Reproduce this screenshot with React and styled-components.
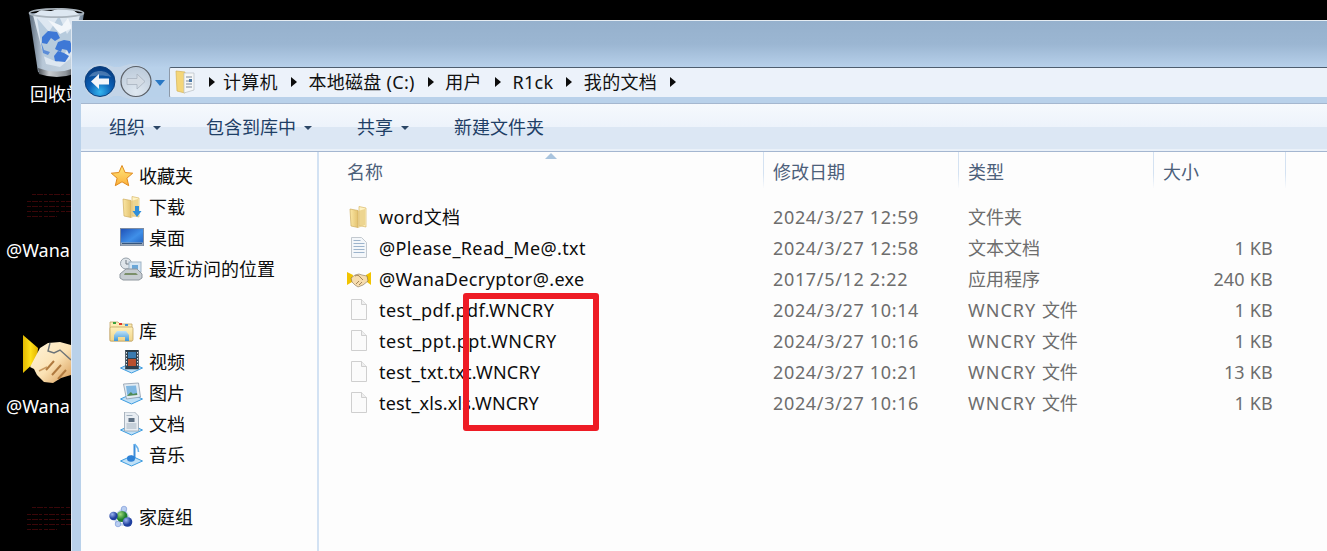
import React from "react";
import styled, { createGlobalStyle } from "styled-components";

const Global = createGlobalStyle`
  html, body { margin: 0; padding: 0; background: #000; overflow: hidden; }
  * { box-sizing: border-box; }
  body { font-family: "Noto Sans", "Noto Sans CJK SC", sans-serif; font-size: 18px; }
`;

const Desktop = styled.div`
  position: relative; width: 1327px; height: 551px; background: #000; overflow: hidden;
`;
const DesktopItem = styled.div`
  position: absolute; left: ${p => p.$x}px; top: ${p => p.$y}px; line-height: 0;
`;
const DesktopLabel = styled.div`
  position: absolute; left: ${p => p.$x}px; top: ${p => p.$y}px;
  color: #fff; font-size: 18px; line-height: 24px; white-space: nowrap;
`;
const Win = styled.div`
  position: absolute; left: 71px; top: 20px; width: 1256px; height: 531px;
  display: flex; flex-direction: column; border-top: 1px solid #e6edf3; border-left: 1px solid #dfe8f2;
  background: #b9d1ea;
`;
const TitleBar = styled.div`
  height: 46px; flex: none;
  background: linear-gradient(#96b1cd 0, #9bb6d2 50%, #b7d0ea 100%);
`;
const NavRow = styled.div`
  height: 30px; flex: none; display: flex; align-items: center; background: #b8d1ea;
`;
const NavArea = styled.div`
  width: 97px; flex: none; height: 30px; position: relative;
`;
const NavSlot = styled.div`
  position: absolute; left: 12px; top: -4px; line-height: 0;
`;
const AddressBar = styled.div`
  flex: 1; height: 31px; display: flex; align-items: center;
  background: #ecf2fa; border-top: 1px solid #4e5d6e; border-left: 1px solid #8d99a8; border-bottom: 1px solid #a3adb9;
  border-top-left-radius: 2px; border-bottom-left-radius: 2px; padding-left: 5px;
`;
const Crumb = styled.span`
  color: #111; font-size: 18px; line-height: 24px; white-space: nowrap; letter-spacing: .3px;
`;
const CrumbArrow = styled.i`
  flex: none; width: 0; height: 0; margin: 0 ${p => p.$right ?? 11.5}px 0 ${p => p.$left ?? 13}px;
  border-left: 6px solid #0c0c0c; border-top: 5.5px solid transparent; border-bottom: 5.5px solid transparent;
`;
const Strip = styled.div`
  height: 6px; flex: none; background: #b9d1ea;
`;
const Main = styled.div`
  flex: 1; min-height: 0; display: flex; flex-direction: column; margin-left: 9px;
`;
const Toolbar = styled.div`
  height: 49px; flex: none; display: flex; align-items: center; gap: 45px; padding: 0 0 1px 28px;
  background: linear-gradient(#f6f9fd 0, #edf3fb 48%, #dce7f4 48%, #dce7f4 96%, #eaf1f9 96%);
  border-top: 1px solid #a5b7cf; border-bottom: 1px solid #a4b6d0;
`;
const ToolButton = styled.div`
  display: flex; align-items: center; gap: 8px; color: #1f3f66; font-size: 18px; line-height: 24px; white-space: nowrap;
`;
const Caret = styled.i`
  width: 0; height: 0; margin-top: 2px;
  border-top: 4px solid #2c4766; border-left: 4px solid transparent; border-right: 4px solid transparent;
`;
const Body = styled.div`
  flex: 1; min-height: 0; display: flex; background: #fdfdfd;
`;
const Sidebar = styled.nav`
  width: 236px; flex: none; padding: 8px 0 0 28px; display: flex; flex-direction: column;
`;
const Divider = styled.div`
  width: 2px; flex: none; background: #d3e2f3;
`;
const NavGroup = styled.div`
  display: flex; flex-direction: column; margin-bottom: 31px;
`;
const NavItem = styled.div`
  height: 31px; display: flex; align-items: center; gap: 5px;
  padding-left: ${p => (p.$child ? 10 : 0)}px;
  color: #0d0d0d; font-size: 18px; line-height: 24px; white-space: nowrap;
`;
const IconBox = styled.span`
  width: 25px; height: 25px; flex: none; display: flex; align-items: center; justify-content: center;
`;
const Content = styled.section`
  flex: 1; position: relative; min-width: 0; background: #fdfdfd;
`;
const SortArrow = styled.svg`
  position: absolute; left: 226px; top: 1px;
`;
const Header = styled.div`
  height: 41px; display: grid; grid-template-columns: 445px 195px 195px 132px 1fr;
`;
const HeaderCell = styled.div`
  height: 36px; padding: 4px 0 0 ${p => p.$pad}px; color: #4c607a; font-size: 18px; line-height: 32px;
  border-right: 1px solid; border-image: linear-gradient(#d4e2f2 60%, transparent) 1;
`;
const Rows = styled.div`
  display: flex; flex-direction: column; margin-top: 8px;
`;
const Row = styled.div`
  height: 31px; display: grid; grid-template-columns: 444px 195px 185px 130px; align-items: center;
  white-space: nowrap; font-size: 18px; line-height: 24px;
`;
const NameCell = styled.div`
  display: flex; align-items: center; gap: 8px; padding-left: 28px; color: #0d0d0d;
  letter-spacing: ${p => p.$track}px;
`;
const DateCell = styled.div`
  padding-left: 10px; color: #6d6d6d; letter-spacing: .66px;
`;
const TypeCell = styled.div`
  padding-left: 10px; color: #6d6d6d;
`;
const LatinRun = styled.span`
  letter-spacing: 1px;
`;
const SizeCell = styled.div`
  text-align: right; color: #6d6d6d; letter-spacing: .2px;
`;
const FileIconBox = styled.span`
  width: 24px; height: 24px; flex: none; display: flex; align-items: center; justify-content: center;
`;
const Highlight = styled.div`
  position: absolute; left: 144px; top: 141px; width: 136px; height: 138px;
  border: 6px solid #ee1c25; border-radius: 3px;
`;

const StarIcon = () => (
  <svg width="24" height="24" viewBox="0 0 24 24">
    <defs><linearGradient id="st" x1="0" y1="0" x2="0" y2="1"><stop offset="0" stopColor="#ffe77a"/><stop offset="1" stopColor="#fbb03b"/></linearGradient></defs>
    <path d="M12 1.500l3.100 7 7.600.7-5.800 5 1.800 7.500L12 17.800l-6.700 3.900 1.800-7.500-5.800-5 7.600-.7z" fill="url(#st)" stroke="#e08a1e" strokeWidth="1"/>
  </svg>
);
const FolderIcon = ({ arrow }) => (
  <svg width="22" height="24" viewBox="0 0 22 24">
    <defs><linearGradient id="fd" x1="0" y1="0" x2="1" y2="0"><stop offset="0" stopColor="#fbe7a5"/><stop offset="1" stopColor="#e3c26f"/></linearGradient></defs>
    <path d="M6 1.500l7 1.500v19l-7 -1.500z" fill="#fff3c4" stroke="#d9b767" strokeWidth=".7" transform="translate(5 0)"/>
    <path d="M2 4l8 1.500v17l-7-1.500z" fill="url(#fd)" stroke="#cfae5f" strokeWidth=".7"/>
    <path d="M10 6l7-2v16l-7 3z" fill="#e6c77a" opacity=".7"/>
    {arrow && <path d="M16 11h4v5h2.500l-4.500 6-4.500-6h2.500z" fill="#2f8ed9" transform="translate(-2 0)"/>}
  </svg>
);
const DesktopPcIcon = () => (
  <svg width="24" height="20" viewBox="0 0 24 20">
    <defs><linearGradient id="dk" x1="0" y1="0" x2="1" y2="1"><stop offset="0" stopColor="#1f4fb5"/><stop offset=".55" stopColor="#3f8fe8"/><stop offset="1" stopColor="#1c5dbf"/></linearGradient></defs>
    <rect x=".5" y=".5" width="23" height="17" fill="url(#dk)" stroke="#7d8ca3"/>
    <rect x="1" y="14.500" width="22" height="3" fill="#9aa7b7"/>
    <path d="M2 15.500h20" stroke="#34557d"/>
  </svg>
);
const RecentIcon = () => (
  <svg width="25" height="24" viewBox="0 0 25 24">
    <circle cx="7" cy="6.500" r="5.500" fill="#dfe5ea" stroke="#97a1aa"/>
    <path d="M7 3v4h3" stroke="#6f7982" fill="none"/>
    <rect x="10" y="5" width="12" height="10" fill="#d6e6f3" stroke="#9fb3c4"/>
    <rect x="13" y="8" width="6" height="5" fill="#6aa7d8"/>
    <path d="M1 17l6-5h11l5 5v4l-3 2H4l-3-2z" fill="#c6ccd1" stroke="#8f979e"/>
    <path d="M6 16h11l2 2H5z" fill="#7b8f6a"/>
  </svg>
);
const LibraryIcon = () => (
  <svg width="25" height="24" viewBox="0 0 25 24">
    <defs><linearGradient id="lb" x1="0" y1="0" x2="0" y2="1"><stop offset="0" stopColor="#fff1bb"/><stop offset="1" stopColor="#f0d489"/></linearGradient>
    <linearGradient id="lc" x1="0" y1="0" x2="0" y2="1"><stop offset="0" stopColor="#bfe2f7"/><stop offset="1" stopColor="#3c97d8"/></linearGradient></defs>
    <path d="M1 3h8l2 2h12v17H1z" fill="url(#lb)" stroke="#c2a565" strokeWidth=".8"/>
    <rect x="1" y="8" width="23" height="14" rx="1.500" fill="url(#lb)" stroke="#c2a565" strokeWidth=".8"/>
    <rect x="4" y="3" width="3" height="2" fill="#3aa13f"/><rect x="10" y="4" width="3" height="2" fill="#e1372b"/><rect x="16" y="5" width="3" height="2" fill="#3f8fdc"/>
    <path d="M5 22v-6l3-4h9l3 4v6h-4v-4H9v4z" fill="url(#lc)"/>
  </svg>
);
const Pedestal = () => (<path d="M1 18l11-5 11 5-11 5z" fill="#bfe0f7" stroke="#3d9ce0" strokeWidth="1"/>);
const VideoIcon = () => (
  <svg width="25" height="24" viewBox="0 0 24 24">
    <Pedestal/>
    <rect x="6" y="0" width="13" height="19" fill="#2d3f4d" stroke="#20303a" strokeWidth=".5"/>
    <rect x="8.500" y="2" width="8" height="6" fill="#3a7bb0"/><rect x="8.500" y="9" width="8" height="7" fill="#b8502f"/>
    <path d="M7 2v15M18 2v15" stroke="#dfe5ea" strokeDasharray="1.500 1.500"/>
  </svg>
);
const PictureIcon = () => (
  <svg width="25" height="24" viewBox="0 0 24 24">
    <Pedestal/>
    <path d="M4 3l15-1 2 14-14 2z" fill="#e3ecf3" stroke="#8d9bab" strokeWidth=".8"/>
    <path d="M6.500 5l10-.5 1.300 9-10 1z" fill="#7fb7e2"/>
    <path d="M7.400 15l4-4 2 2 4-1 .4 2z" fill="#4f8a55"/>
  </svg>
);
const DocIcon = () => (
  <svg width="25" height="24" viewBox="0 0 24 24">
    <Pedestal/>
    <path d="M5 0h10l4 4v15H5z" fill="#e8edf2" stroke="#97a3b0" strokeWidth=".8"/>
    <rect x="9" y="6" width="6" height="4" fill="#5d6f82"/>
    <path d="M7 3.500h6M7 12h10M7 14h10M7 16h10" stroke="#9cabba" strokeWidth=".9"/>
  </svg>
);
const MusicIcon = () => (
  <svg width="25" height="24" viewBox="0 0 24 24">
    <Pedestal/>
    <path d="M15 1v14.500" stroke="#3c8edb" strokeWidth="2" fill="none"/>
    <path d="M15 1c2 3 4.500 3 4 8" stroke="#69b3ec" strokeWidth="1.600" fill="none"/>
    <ellipse cx="11.500" cy="15.500" rx="4" ry="3.200" fill="#2f82d6"/>
  </svg>
);
const HomeGroupIcon = () => (
  <svg width="25" height="24" viewBox="0 0 25 24">
    <defs>
      <radialGradient id="hb" cx=".35" cy=".3"><stop offset="0" stopColor="#9db7f0"/><stop offset="1" stopColor="#20409f"/></radialGradient>
      <radialGradient id="hg" cx=".35" cy=".3"><stop offset="0" stopColor="#9fdc7e"/><stop offset="1" stopColor="#1d7d2c"/></radialGradient>
    </defs>
    <path d="M5 11L15 3.500M5 11l3 8M15 3.500l6 12M8 19l10 1" stroke="#c4d6ee" strokeWidth="2.500" fill="none"/>
    <circle cx="15" cy="4" r="2.800" fill="#b9cdf0" stroke="#5f83cf" strokeWidth=".5"/>
    <circle cx="9" cy="19" r="2.800" fill="#b9cdf0" stroke="#5f83cf" strokeWidth=".5"/>
    <circle cx="13" cy="11.500" r="5.500" fill="url(#hg)"/>
    <circle cx="4.500" cy="11" r="4.200" fill="url(#hb)"/>
    <circle cx="18.500" cy="17" r="4.800" fill="url(#hb)"/>
  </svg>
);
const FileIcon = () => (
  <svg width="18" height="21" viewBox="0 0 18 21">
    <path d="M1.500 .5h10l5 5v15h-15z" fill="#fbfbfb" stroke="#cfcfcf"/>
    <path d="M11.500 .5v5h5" fill="#efefef" stroke="#cfcfcf"/>
  </svg>
);
const TextFileIcon = () => (
  <svg width="18" height="21" viewBox="0 0 18 21">
    <path d="M1.500 .5h10l5 5v15h-15z" fill="#f4f7fa" stroke="#c3c9cf"/>
    <path d="M3.500 3.500h7M3.500 6.500h11M3.500 9.500h11M3.500 12.500h11M3.500 15.500h11" stroke="#9db4cc"/>
  </svg>
);
const HandshakeSmall = () => (
  <svg width="24" height="20" viewBox="0 0 24 20">
    <path d="M0 3l6 3-1 7-5 3z" fill="#f2c400"/>
    <path d="M24 3l-5 3 1 7 4 3z" fill="#f2c400"/>
    <path d="M4 9l4-3 4-1 3 1 5 1 1 5-5 4-5 2-3-2-3-3z" fill="#f6dcae" stroke="#6b5a40" strokeWidth=".5"/>
    <path d="M8 7c2-1 4-1 5 1l3 3M9 15l3-3M12 16l3-3" stroke="#9a7a4e" strokeWidth=".9" fill="none"/>
  </svg>
);
const HandshakeLarge = () => (
  <svg width="48" height="50" viewBox="0 0 48 50">
    <defs>
      <linearGradient id="cf" x1="0" y1="0" x2="1" y2="0"><stop offset="0" stopColor="#e2b900"/><stop offset=".5" stopColor="#ffe01a"/><stop offset="1" stopColor="#e3b400"/></linearGradient>
      <linearGradient id="hn" x1="0" y1="0" x2="1" y2="1"><stop offset="0" stopColor="#fff5dc"/><stop offset=".55" stopColor="#fbe2b4"/><stop offset="1" stopColor="#d69a55"/></linearGradient>
    </defs>
    <path d="M0 2l15 13-1 12L0 40z" fill="url(#cf)"/>
    <path d="M7 34l10-19 8-5 12-1 11 3v30l-10 3-8 5-9-1-7-7-3-6z" fill="url(#hn)"/>
    <path d="M27 10l-2 8 6 2 6-3 11 10" stroke="#6d7478" strokeWidth="1.400" fill="none"/>
    <path d="M23 37l8-9M29 42l9-10M35 46l8-9" stroke="#b07a3f" strokeWidth="2" fill="none"/>
    <path d="M16 38l8-4" stroke="#c99a60" strokeWidth="1.500"/>
  </svg>
);
const RecycleBin = () => (
  <svg width="57" height="72" viewBox="0 0 57 72">
    <defs>
      <linearGradient id="rb" x1="0" y1="0" x2="1" y2="0"><stop offset="0" stopColor="#5d6c7c"/><stop offset=".25" stopColor="#b8c8d8"/><stop offset=".75" stopColor="#c4d3e0"/><stop offset="1" stopColor="#6e8094"/></linearGradient>
      <linearGradient id="rbase" x1="0" y1="0" x2="1" y2="0"><stop offset="0" stopColor="#4a4f55"/><stop offset=".3" stopColor="#c8ccd0"/><stop offset=".75" stopColor="#8f959b"/><stop offset="1" stopColor="#43474c"/></linearGradient>
    </defs>
    <path d="M1 7L10 66q18 7 37 0L56 7z" fill="url(#rb)"/>
    <path d="M5 9l8-5 10 1 10-3 12 2 7 5-6 24-4 20-10 8-14-3-6-22z" fill="#dde7f1"/>
    <path d="M9 12l12 14 10-16 8 18 6-8-2 20-14 16-14-6z" fill="#b7cbdd"/>
    <path d="M20 14l14 6 6-8 4 10-12 6z" fill="#f2f6fa"/>
    <g fill="#3e78d6">
      <path d="M14 31l6-6 9 1 3 6-5 3-4-3-4 6-5-1z"/>
      <path d="M27 43l3-7 6-2 6 1 3 8-4 5-2-4-5-1-1 3z"/>
      <path d="M30 45l6 2 5 3-4 6-10-1-1-5z"/>
      <path d="M13 36l3 8 6 2-2 3-5-2z" opacity=".75"/>
    </g>
    <path d="M10 62q18 7 37 0l-1 6q-17 6-35 0z" fill="url(#rbase)"/>
    <ellipse cx="28.500" cy="7" rx="27" ry="4.200" fill="none" stroke="#a9b3bc" strokeWidth="1.800"/>
  </svg>
);
const NavButtons = () => (
  <svg width="84" height="38" viewBox="0 0 84 38">
    <defs>
      <radialGradient id="bk" cx=".5" cy=".85" r=".8"><stop offset="0" stopColor="#35b6ef"/><stop offset=".5" stopColor="#0a5fb5"/><stop offset="1" stopColor="#063b80"/></radialGradient>
      <radialGradient id="fw" cx=".5" cy=".85" r=".9"><stop offset="0" stopColor="#dfe8f1"/><stop offset="1" stopColor="#b9c8d8"/></radialGradient>
    </defs>
    <path d="M17 1c6 0 9 2 13 3h6c4-1 7-3 13-3 9 0 16 7 16 17.500S58 36 49 36c-6 0-9-2-13-3h-6c-4 1-7 3-13 3C7 36 0 29 0 18.500S7 1 17 1z" fill="#c7d6e6" opacity=".7"/>
    <circle cx="16" cy="18.500" r="15" fill="url(#bk)" stroke="#0b3f7c"/>
    <path d="M5 14c4-8 18-8 22 0-6-2-16-2-22 0z" fill="#fff" opacity=".25"/>
    <path d="M7 18.500l8-7.500v4.500h10v6H15V26z" fill="#f3f6fa"/>
    <circle cx="52" cy="18.500" r="15" fill="url(#fw)" stroke="#5a5f66" strokeWidth="1.200"/>
    <path d="M61 18.500L53 11v4.500H43v6h10V26z" fill="#d3dbe4" stroke="#a8b3bf" strokeWidth=".8"/>
    <path d="M71 17h10l-5 6z" fill="#2978c4"/>
  </svg>
);
const AddressFolder = () => (
  <svg width="20" height="26" viewBox="0 0 20 26">
    <path d="M1 2l9 1v21l-8-2z" fill="#f4d679" stroke="#d6b356" strokeWidth=".7"/>
    <path d="M9 4l10 0v17l-10 3z" fill="#f5f7f8" stroke="#b9bfc4" strokeWidth=".7"/>
    <path d="M11 8h6M11 12h3M11 15h6M11 18h6" stroke="#7e8a99"/>
    <rect x="14" y="10" width="3" height="3" fill="#4c79a8"/>
  </svg>
);
const ReadmeMark = () => (
  <svg width="71" height="26" viewBox="0 0 71 26" shapeRendering="crispEdges">
    <g stroke="#3a0709" strokeWidth="1" strokeDasharray="4 1 6 1 3 2" fill="none">
      <path d="M32 1.500h39M27 8.500h44M27 13.500h44M27 18.500h44M27 23.500h30"/>
    </g>
  </svg>
);

const sidebar = [
  [{ icon: <StarIcon/>, label: "收藏夹" },
   { icon: <FolderIcon arrow/>, label: "下载", child: true },
   { icon: <DesktopPcIcon/>, label: "桌面", child: true },
   { icon: <RecentIcon/>, label: "最近访问的位置", child: true }],
  [{ icon: <LibraryIcon/>, label: "库" },
   { icon: <VideoIcon/>, label: "视频", child: true },
   { icon: <PictureIcon/>, label: "图片", child: true },
   { icon: <DocIcon/>, label: "文档", child: true },
   { icon: <MusicIcon/>, label: "音乐", child: true }],
  [{ icon: <HomeGroupIcon/>, label: "家庭组" }],
];
const files = [
  { icon: <FolderIcon/>, name: "word文档", track: .38, date: "2024/3/27 12:59", type: "文件夹", size: "" },
  { icon: <TextFileIcon/>, name: "@Please_Read_Me@.txt", track: .38, date: "2024/3/27 12:58", type: "文本文档", size: "1 KB" },
  { icon: <HandshakeSmall/>, name: "@WanaDecryptor@.exe", track: .38, date: "2017/5/12 2:22", type: "应用程序", size: "240 KB" },
  { icon: <FileIcon/>, name: "test_pdf.pdf.WNCRY", track: .44, date: "2024/3/27 10:14", latin: "WNCRY ", type: "文件", size: "1 KB" },
  { icon: <FileIcon/>, name: "test_ppt.ppt.WNCRY", track: .5, date: "2024/3/27 10:16", latin: "WNCRY ", type: "文件", size: "1 KB" },
  { icon: <FileIcon/>, name: "test_txt.txt.WNCRY", track: .27, date: "2024/3/27 10:21", latin: "WNCRY ", type: "文件", size: "13 KB" },
  { icon: <FileIcon/>, name: "test_xls.xls.WNCRY", track: .16, date: "2024/3/27 10:16", latin: "WNCRY ", type: "文件", size: "1 KB" },
];
const crumbs = ["计算机", "本地磁盘 (C:)", "用户", "R1ck", "我的文档"];
const tools = [["组织", true], ["包含到库中", true], ["共享", true], ["新建文件夹", false]];

export default function App() {
  return (
    <Desktop>
      <Global/>
      <DesktopItem $x={28} $y={6}><RecycleBin/></DesktopItem>
      <DesktopLabel $x={30} $y={82}>回收站</DesktopLabel>
      <DesktopItem $x={0} $y={193}><ReadmeMark/></DesktopItem>
      <DesktopLabel $x={6} $y={238}>@WanaDecryptor@.exe</DesktopLabel>
      <DesktopItem $x={23} $y={333}><HandshakeLarge/></DesktopItem>
      <DesktopLabel $x={6} $y={394}>@WanaDecryptor@.exe</DesktopLabel>
      <DesktopItem $x={0} $y={506}><ReadmeMark/></DesktopItem>
      <Win>
        <TitleBar/>
        <NavRow>
          <NavArea><NavSlot><NavButtons/></NavSlot></NavArea>
          <AddressBar>
            <AddressFolder/>
            <CrumbArrow $left={14} $right={8}/>
            {crumbs.map(c => (
              <React.Fragment key={c}>
                <Crumb>{c}</Crumb>
                <CrumbArrow/>
              </React.Fragment>
            ))}
          </AddressBar>
        </NavRow>
        <Strip/>
        <Main>
          <Toolbar>
            {tools.map(([t, caret]) => (
              <ToolButton key={t}>{t}{caret && <Caret/>}</ToolButton>
            ))}
          </Toolbar>
          <Body>
            <Sidebar>
              {sidebar.map((g, i) => (
                <NavGroup key={i}>
                  {g.map(it => (
                    <NavItem key={it.label} $child={it.child}>
                      <IconBox>{it.icon}</IconBox>{it.label}
                    </NavItem>
                  ))}
                </NavGroup>
              ))}
            </Sidebar>
            <Divider/>
            <Content>
              <SortArrow width="12" height="6" viewBox="0 0 12 6"><path d="M6 0l6 6H0z" fill="#a9c4de"/></SortArrow>
              <Header>
                <HeaderCell $pad={28}>名称</HeaderCell>
                <HeaderCell $pad={9}>修改日期</HeaderCell>
                <HeaderCell $pad={9}>类型</HeaderCell>
                <HeaderCell $pad={9}>大小</HeaderCell>
              </Header>
              <Rows>
                {files.map(f => (
                  <Row key={f.name}>
                    <NameCell $track={f.track}><FileIconBox>{f.icon}</FileIconBox>{f.name}</NameCell>
                    <DateCell>{f.date}</DateCell>
                    <TypeCell>{f.latin && <LatinRun>{f.latin}</LatinRun>}{f.type}</TypeCell>
                    <SizeCell>{f.size}</SizeCell>
                  </Row>
                ))}
              </Rows>
              <Highlight/>
            </Content>
          </Body>
        </Main>
      </Win>
    </Desktop>
  );
}
